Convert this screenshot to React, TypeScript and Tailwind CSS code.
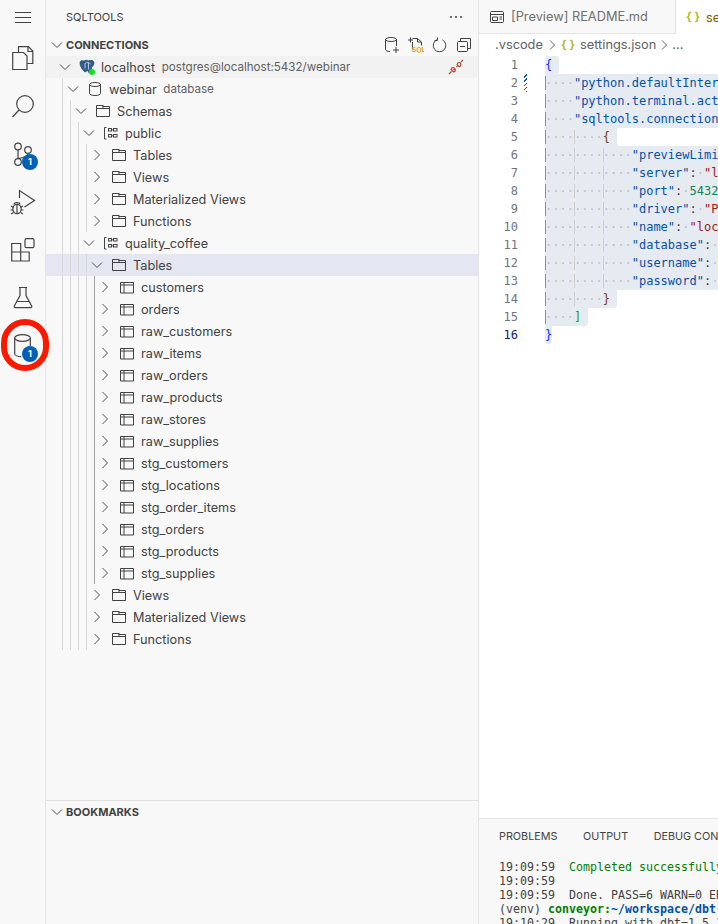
import React from "react";

const UI = "font-['Inter','Liberation_Sans',sans-serif]";
const MONO = "font-['DejaVu_Sans_Mono','Liberation_Mono',monospace]";

type IconKind = "pg" | "db" | "folder" | "schema" | "table";
type Row = { d: number; open?: boolean; icon: IconKind; label: string; desc?: string; cls?: string; dark?: boolean; plug?: boolean };

const tables = ["customers","orders","raw_customers","raw_items","raw_orders","raw_products","raw_stores","raw_supplies","stg_customers","stg_locations","stg_order_items","stg_orders","stg_products","stg_supplies"];

const rows: Row[] = [
  { d: 0, open: true, icon: "pg", label: "localhost", desc: "postgres@localhost:5432/webinar", cls: "bg-[#f2f2f2]", plug: true },
  { d: 1, open: true, icon: "db", label: "webinar", desc: "database" },
  { d: 2, open: true, icon: "folder", label: "Schemas" },
  { d: 3, open: true, icon: "schema", label: "public" },
  { d: 4, icon: "folder", label: "Tables" },
  { d: 4, icon: "folder", label: "Views" },
  { d: 4, icon: "folder", label: "Materialized Views" },
  { d: 4, icon: "folder", label: "Functions" },
  { d: 3, open: true, icon: "schema", label: "quality_coffee" },
  { d: 4, open: true, icon: "folder", label: "Tables", cls: "bg-[#e4e6f1]" },
  ...tables.map((t) => ({ d: 5, icon: "table" as IconKind, label: t, dark: true })),
  { d: 4, icon: "folder", label: "Views" },
  { d: 4, icon: "folder", label: "Materialized Views" },
  { d: 4, icon: "folder", label: "Functions" },
];

const Chevron = ({ open }: { open?: boolean }) => (
  <svg width="16" height="16" viewBox="0 0 16 16" fill="none" stroke="#505050" strokeWidth="1" className="shrink-0">
    {open ? <path d="M3 5.500l5 5 5-5" /> : <path d="M5.500 3l5 5-5 5" />}
  </svg>
);

const TreeIcon = ({ kind }: { kind: IconKind }) => {
  if (kind === "pg")
    return (
      <svg width="16" height="16" viewBox="0 0 16 16" className="shrink-0">
        <path d="M1 3.500C1 1.500 3 1.500 5 2c1.500-1 3-1 4.500 -.2 2-.8 5-.8 5.500 1.700.1 2.300-1.200 4-2.400 5l-.3 3.500c-.2 1.700-1.600 2-2.600 1.500L8.600 11.500 6 13C4 11.500 2.700 9.500 2 8 1.300 6.500 1 5 1 3.500z" fill="#2f5f8a" stroke="#1c3d5e" strokeWidth=".6" />
        <path d="M6 4.500v5M9.500 3.500v7M6 4.500c2-1.500 4-1 5.500 .500" fill="none" stroke="#b9d2e6" strokeWidth=".9" />
        <circle cx="13" cy="13" r="3" fill="#14e414" />
      </svg>
    );
  if (kind === "db")
    return (
      <svg width="16" height="16" viewBox="0 0 16 16" fill="none" stroke="#424242" strokeWidth="1" className="shrink-0">
        <ellipse cx="8" cy="3.500" rx="5.500" ry="2" />
        <path d="M2.500 3.500v9c0 1.100 2.500 2 5.500 2s5.500-.9 5.500-2v-9" />
      </svg>
    );
  if (kind === "folder")
    return (
      <svg width="16" height="16" viewBox="0 0 16 16" fill="none" stroke="#424242" strokeWidth="1" className="shrink-0">
        <path d="M1.500 2.500h6.500v1h6.500v10h-13zM1.500 5.500h13M8 2.500v3" />
      </svg>
    );
  if (kind === "schema")
    return (
      <svg width="16" height="16" viewBox="0 0 16 16" fill="none" stroke="#424242" strokeWidth="1" className="shrink-0">
        <path d="M3.500 2.500h-2v11.500h2" />
        <rect x="5.500" y="3.500" width="3" height="2.500" />
        <rect x="5.500" y="9.500" width="3" height="2.500" />
        <rect x="10.500" y="3.500" width="3.500" height="2.500" />
        <rect x="10.500" y="9.500" width="3.500" height="2.500" />
        <path d="M8.500 4.800h2M8.500 10.800h2" />
      </svg>
    );
  return (
    <svg width="16" height="16" viewBox="0 0 16 16" fill="none" stroke="#424242" strokeWidth="1" className="shrink-0">
      <path d="M1.500 3.500h13v10.500h-13zM1.500 6h13M5 3.500v10.500" />
    </svg>
  );
};

const TreeRow = ({ r }: { r: Row }) => (
  <div className={`flex h-[22px] items-center ${r.cls ?? ""}`}>
    <div className="w-4 h-full shrink-0" />
    {Array.from({ length: r.d }).map((_, i) => (
      <div key={i} className={`w-2 h-full shrink-0 border-l ${r.dark && i === r.d - 1 ? "border-[#a3a3a3]" : "border-[#d8d8d8]"}`} />
    ))}
    <div className="-ml-[5px] flex items-center min-w-0 flex-1">
      <Chevron open={r.open} />
      <div className="ml-[6px] shrink-0"><TreeIcon kind={r.icon} /></div>
      <span className="ml-[6px] pt-px text-[12.700px] text-[#424242] whitespace-pre">{r.label}</span>
      {r.desc && <span className="ml-[6.500px] pt-px text-[11.600px] text-[#616161] whitespace-pre">{r.desc}</span>}
      {r.plug && (
        <svg width="16" height="16" viewBox="0 0 16 16" fill="none" stroke="#b5402a" strokeWidth="1.100" className="ml-auto mr-[14px] shrink-0">
          <path d="M1 15l2.500-2.500M15 1l-2 2M7 9.500l-1.500 1.500M9.500 7l-1.200 1.200" />
          <path d="M3 10.500l2.500 2.500c1.300-.3 2-1.500 1.800-2.700L5.800 8.700c-1.200-.2-2.500.6-2.800 1.800zM9 5.500c.3-1.300 1.500-2.100 2.800-1.900l1 1c.3 1.300-.6 2.700-1.800 3z" />
        </svg>
      )}
    </div>
  </div>
);

const Act = ({ vb, badge, children }: { vb: string; badge?: boolean; children: React.ReactNode }) => (
  <div className="relative h-12 flex items-center justify-center">
    <svg width="32" height="32" viewBox={vb} fill="none" stroke="#424242" strokeWidth="1.200">{children}</svg>
    {badge && (
      <span className={`absolute left-[22px] top-[24px] w-4 h-4 rounded-full bg-[#005fb8] text-white text-[9px] font-bold flex items-center justify-center ${UI}`}>1</span>
    )}
  </div>
);

const D = ({ n }: { n: number }) => <span className="text-[#bcc2c8]">{"·".repeat(n)}</span>;
const Ind = ({ g }: { g: number }) => (
  <span className={`text-[#bcc2c8] ${g === 0 ? "shadow-[inset_1px_0_0_#8f8f8f]" : "shadow-[inset_1px_0_0_#cfcfcf]"}`}>····</span>
);
const K = ({ t }: { t: string }) => <span className="text-[#0451a5]">{t}</span>;
const S = ({ t }: { t: string }) => <span className="text-[#a31515]">{t}</span>;
const C = () => <span className="text-[#3b3b3b]">:</span>;
const Indents = ({ n }: { n: number }) => (
  <>
    {Array.from({ length: n }).map((_, i) => <Ind key={i} g={i} />)}
  </>
);

const Prop = ({ k, v, num }: { k: string; v: string; num?: boolean }) => (
  <>
    <Indents n={3} />
    <K t={`"${k}"`} />
    <C />
    <D n={1} />
    {num ? <span className="text-[#098658]">{v}</span> : <S t={`"${v}"`} />}
  </>
);

const SEL = "bg-[#e5ebf1]";
const codeLines: { cls: string; el: React.ReactNode; gap?: boolean }[] = [
  { cls: `w-fit pr-[7.200px] rounded-t-[3px] rounded-br-[3px] ${SEL}`, el: <span className="text-[#0431fa]">{"{"}</span> },
  { cls: SEL, el: <><Indents n={1} /><K t={'"python.defaultInterpreterPath"'} /></> },
  { cls: SEL, el: <><Indents n={1} /><K t={'"python.terminal.activateEnvironment"'} /></> },
  { cls: SEL, el: <><Indents n={1} /><K t={'"sqltools.connections"'} /></> },
  { cls: SEL, gap: true, el: <><Indents n={2} /><span className="text-[#7b3814]">{"{"}</span><span>{" "}</span></> },
  { cls: SEL, el: <><Prop k="previewLimit" v="50" num /></> },
  { cls: SEL, el: <Prop k="server" v="localhost" /> },
  { cls: SEL, el: <Prop k="port" v="5432" num /> },
  { cls: SEL, el: <Prop k="driver" v="PostgreSQL" /> },
  { cls: SEL, el: <Prop k="name" v="localhost" /> },
  { cls: SEL, el: <Prop k="database" v="webinar" /> },
  { cls: SEL, el: <Prop k="username" v="postgres" /> },
  { cls: SEL, el: <Prop k="password" v="postgres" /> },
  { cls: `w-fit pr-[7.200px] rounded-br-[3px] ${SEL}`, el: <><Indents n={2} /><span className="text-[#7b3814]">{"}"}</span></> },
  { cls: `w-fit pr-[7.200px] rounded-br-[3px] ${SEL}`, el: <><Indents n={1} /><span className="text-[#319331]">{"]"}</span></> },
  { cls: `w-fit rounded-b-[3px] ${SEL}`, el: <span className="text-[#0431fa]">{"}"}</span> },
];

export default function App() {
  return (
    <div className={`w-[718px] h-[924px] flex overflow-hidden bg-white ${UI}`}>
      {/* Activity bar */}
      <div className="relative w-[46px] shrink-0 bg-[#f8f8f8] border-r border-[#e5e5e5] flex flex-col">
        <div className="h-[34px] flex items-center justify-center">
          <svg width="16" height="16" viewBox="0 0 16 16" stroke="#424242" strokeWidth="1">
            <path d="M0 3.500h16M0 8.500h16M0 13.500h16" />
          </svg>
        </div>
        <Act vb="6 42 32 32">
          <path d="M17.500 52v-5.300h10l4.300 4.300v12.500h-5.500" />
          <path d="M27 46.700v4.800h4.800" />
          <path d="M11.700 52.500h10.800l3.500 3.500v13.500h-14.300z" />
        </Act>
        <Act vb="6 90 32 32">
          <circle cx="24" cy="104" r="8.300" />
          <path d="M18 110l-6.500 7" />
        </Act>
        <Act vb="6 138 32 32" badge>
          <circle cx="17" cy="146.500" r="3.300" />
          <circle cx="17" cy="162" r="3.300" />
          <circle cx="27" cy="150" r="3.300" />
          <path d="M17 150v8.500M27 153.500c0 3-5 4.500-10 5" />
        </Act>
        <Act vb="6 186 32 32">
          <path d="M18.500 198v-7.500l15 10-10 6.500" />
          <ellipse cx="16" cy="209" rx="4.200" ry="4.700" />
          <path d="M13 204.500c.5-2.500 5.500-2.500 6 0M10 206l2.500 1.500M22 206l-2.500 1.500M9.500 210h2.500M20 210h2.500M10 214l2.500-1.500M22 214l-2.500-1.500M16 205v8.500" />
        </Act>
        <Act vb="6 234 32 32">
          <path d="M10.700 243.500h9v8.500h8.500v9h-17.500zM10.700 252h9v9" />
          <rect x="24" y="238.700" width="9" height="9" rx="1.500" />
        </Act>
        <Act vb="6 282 32 32">
          <path d="M18 287.500h8M19 288v7.500l-5.700 10.500c-.4.900.1 1.700 1 1.700h15.400c.9 0 1.400-.8 1-1.700L25 295.500V288M16 301.500h12" />
        </Act>
        <Act vb="6 330 32 32" badge>
          <ellipse cx="21.500" cy="338" rx="7.800" ry="3.300" />
          <path d="M13.700 338v15.500c0 1.800 3 3.200 6.500 3.200M29.300 338v8" />
        </Act>
        <div className="absolute left-[1px] top-[319px] w-[48px] h-[52px] rounded-full border-[6px] border-[#fb1a00]" />
      </div>

      {/* Sidebar */}
      <div className="w-[432px] shrink-0 bg-[#f8f8f8] flex flex-col">
        <div className="h-[34px] flex items-center pl-5 pr-[14px] justify-between">
          <span className="text-[11px] text-[#424242]">SQLTOOLS</span>
          <svg width="16" height="16" viewBox="0 0 16 16" fill="#424242">
            <circle cx="3" cy="8" r="1" /><circle cx="8" cy="8" r="1" /><circle cx="13" cy="8" r="1" />
          </svg>
        </div>
        <div className="h-[22px] flex items-center pl-[3px] pr-[6px]">
          <Chevron open />
          <span className="ml-px text-[11px] font-bold text-[#424242]">CONNECTIONS</span>
          <div className="ml-auto flex items-center gap-2">
            <svg width="16" height="16" viewBox="0 0 16 16" fill="none" stroke="#424242">
              <ellipse cx="7" cy="2.500" rx="5.500" ry="2" />
              <path d="M1.500 2.500v10c0 1.200 1.800 2 4.500 2M12.500 2.500v6.500M9 13h6M12 10v6" />
            </svg>
            <svg width="16" height="16" viewBox="0 0 16 16" fill="none" stroke="#424242">
              <path d="M4.500 1.500h5l4 3.500v3.500M4.500 5v7h1M9.500 1.500v3.500h4M0 3h5M2.500 .5v5" />
              <text x="3.500" y="15" fontSize="7" fontWeight="700" fill="#e89b2b" stroke="none" fontFamily="Liberation Sans">SQL</text>
            </svg>
            <svg width="16" height="16" viewBox="0 0 16 16" fill="none" stroke="#424242">
              <path d="M5 2.700a6.300 6.300 0 1 0 5.500 .200" />
              <path d="M5.500 .500v3h-3" />
            </svg>
            <svg width="16" height="16" viewBox="0 0 16 16" fill="none" stroke="#424242">
              <path d="M4.500 4.500v-3h10v10h-3" />
              <rect x="1.500" y="4.500" width="10" height="10" rx="1" />
              <path d="M4 9.500h5" />
            </svg>
          </div>
        </div>
        <div className="flex-1">
          {rows.map((r, i) => <TreeRow key={i} r={r} />)}
        </div>
        <div className="border-t border-[#e0e0e0] h-[124px] shrink-0">
          <div className="h-[22px] flex items-center pl-[3px]">
            <Chevron open />
            <span className="ml-px text-[11px] font-bold text-[#424242]">BOOKMARKS</span>
          </div>
        </div>
      </div>

      {/* Editor */}
      <div className="flex-1 min-w-0 flex flex-col border-l border-[#e5e5e5]">
        <div className="h-[34px] shrink-0 flex overflow-hidden">
          <div className="w-[197px] shrink-0 bg-[#f8f8f8] border-r border-b border-[#e5e5e5] flex items-center pl-[10px]">
            <svg width="16" height="16" viewBox="0 0 16 16" fill="none" stroke="#424242" className="shrink-0">
              <rect x="1.500" y="2.500" width="13" height="11" rx="1" />
              <path d="M1.500 5.500h13M3.500 8h5v3.500h-5zM10.500 8h2.500M10.500 10h2.500" />
            </svg>
            <span className="ml-[6px] pt-px text-[12.800px] text-[#6f6f6f] whitespace-pre">[Preview] README.md</span>
          </div>
          <div className="flex items-center pl-[10px] shrink-0">
            <span className={`text-[12px] font-bold text-[#b7b73b] ${UI}`}>{"{ }"}</span>
            <span className="ml-[6px] pt-px text-[12.800px] text-[#895503] whitespace-pre">settings.json</span>
          </div>
        </div>
        <div className="h-[22px] shrink-0 flex items-center pl-4 text-[12.800px] text-[#616161] whitespace-pre">
          <span>.vscode</span>
          <svg width="16" height="16" viewBox="0 0 16 16" fill="none" stroke="#616161" strokeWidth="1" className="ml-px shrink-0"><path d="M6 3.500l4.500 4.500-4.500 4.500" /></svg>
          <span className="ml-px text-[12px] font-bold text-[#b7b73b]">{"{ }"}</span>
          <span className="ml-[5px]">settings.json</span>
          <svg width="16" height="16" viewBox="0 0 16 16" fill="none" stroke="#616161" strokeWidth="1" className="shrink-0"><path d="M6 3.500l4.500 4.500-4.500 4.500" /></svg>
          <span>...</span>
        </div>
        <div className={`flex-1 min-h-0 overflow-hidden text-[12px] leading-[18px] ${MONO}`}>
          {codeLines.map((l, i) => (
            <div key={i} className="flex h-[18px]">
              <div className={`w-[39px] shrink-0 text-right ${i === 15 ? "text-[#0b216f]" : "text-[#6e7681]"}`}>{i + 1}</div>
              <div className="w-[27px] shrink-0 pl-[6px]">
                {i === 1 && <div className="w-[3px] h-[18px] bg-[repeating-linear-gradient(-45deg,#005fb8_0px,#005fb8_1px,#ffffff_1px,#ffffff_3px)]" />}
              </div>
              <div className="flex-1 min-w-0 overflow-hidden">
                {l.gap ? (
                  <div className={`flex h-[18px] ${l.cls}`}>
                    <div className="whitespace-pre shrink-0">{l.el}</div>
                    <div className="flex-1 bg-white rounded-l-[3px]" />
                  </div>
                ) : (
                  <div className={`h-[18px] whitespace-pre ${l.cls}`}>{l.el}</div>
                )}
              </div>
            </div>
          ))}
        </div>
        <div className="h-[106px] shrink-0 bg-[#f8f8f8] border-t border-[#e5e5e5] overflow-hidden">
          <div className="h-[35px] pt-px flex items-center pl-5 gap-[25.500px] text-[10.800px] text-[#424242] whitespace-pre">
            <span>PROBLEMS</span><span>OUTPUT</span><span>DEBUG CONSOLE</span>
          </div>
          <div className={`pt-[6px] pl-5 text-[11.630px] leading-[14px] text-[#424242] whitespace-pre ${MONO}`}>
            <div>19:09:59  <span className="text-[#008000]">Completed successfully</span></div>
            <div>19:09:59</div>
            <div>19:09:59  Done. PASS=6 WARN=0 ERROR=0 SKIP=0 TOTAL=6</div>
            <div>(venv) <span className="font-bold text-[#008000]">conveyor:</span><span className="font-bold text-[#0451a5]">~/workspace/dbt-project</span></div>
            <div>19:10:29  Running with dbt=1.5.1</div>
          </div>
        </div>
      </div>
    </div>
  );
}
